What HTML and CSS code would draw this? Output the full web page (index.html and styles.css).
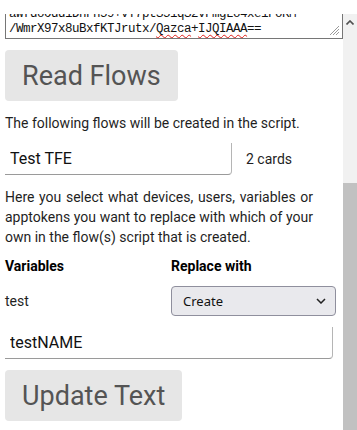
FILE: index.html
```html
<!DOCTYPE html>
<html lang="en">
<head>
    <meta charset="UTF-8">
    <meta name="viewport" content="width=device-width, initial-scale=1.0">
    <title>Flow Script Builder</title>
    <link rel="stylesheet" href="styles.css">
</head>
<body>
    <div class="viewport">
        <!-- Page content -->
        <div class="content">
            <div class="code">
                <div class="code-line">H4sIAAAAAAAACu1Y23LaSBD9FZ5lq0p3qn1dvF7a</div>
                <div class="code-line">aWfdoOdd1DhFh59+vT7ptS51qS2vFmgLo4xe1FoKM</div>
                <div class="code-line">/WmrX97x8uBxfKTJrutx/<span class="typo">Qazca</span>+<span class="typo">IJQIAAA</span>==</div>
                <svg class="grip" width="11" height="11" viewBox="0 0 11 11">
                    <path d="M10 1 L1 10 M10 4 L4 10 M10 7 L7 10" stroke="#9a9a9a" stroke-width="1"/>
                </svg>
            </div>

            <button class="big-btn">Read Flows</button>

            <p class="note">The following flows will be created in the script.</p>

            <div class="flow-row">
                <input type="text" class="field flow-name" value="Test TFE">
                <span class="card-count">2 cards</span>
            </div>

            <p class="note">Here you select what devices, users, variables or apptokens you want to replace with which of your own in the flow(s) script that is created.</p>

            <div class="replace-grid">
                <div class="head">Variables</div>
                <div class="head">Replace with</div>
                <div class="var-name">test</div>
                <div class="replace-select">
                    <span>Create</span>
                    <svg width="10" height="6" viewBox="0 0 10 6">
                        <path d="M1 1 L5 5 L9 1" fill="none" stroke="#222" stroke-width="1.5"/>
                    </svg>
                </div>
            </div>

            <input type="text" class="field new-name" value="testNAME">

            <button class="big-btn">Update Text</button>
        </div>

        <!-- Page scrollbar -->
        <div class="scrollbar">
            <div class="scroll-up">
                <svg width="8" height="5" viewBox="0 0 8 5">
                    <path d="M0.5 4.5 L4 1 L7.5 4.5" fill="none" stroke="#505050" stroke-width="1.6"/>
                </svg>
            </div>
            <div class="scroll-track"></div>
            <div class="scroll-thumb"></div>
        </div>
    </div>
</body>
</html>
```

FILE: styles.css
```css
body {
    margin: 0;
    padding: 0;
    background-color: #ffffff;
    font-family: Roboto, Arial, sans-serif;
    color: #1f1f1f;
    overflow: hidden;
}
.viewport {
    display: flex;
    flex-direction: row;
    margin-top: 14px;
    height: 416px;
    overflow: hidden;
}
.content {
    flex: 1;
    display: flex;
    flex-direction: column;
    align-items: flex-start;
    padding-left: 5px;
    overflow: hidden;
}
.code {
    position: relative;
    box-sizing: border-box;
    width: 338px;
    height: 60px;
    margin-top: -35px;
    padding: 1px 2px;
    border: 1px solid #767676;
    display: flex;
    flex-direction: column;
    justify-content: flex-end;
    font-family: "Liberation Mono", monospace;
    font-size: 12.5px;
    letter-spacing: -0.5px;
    line-height: 15px;
    color: #111;
    white-space: nowrap;
    overflow: hidden;
}
.code-line {
    padding-left: 1px;
}
.typo {
    text-decoration: underline wavy #e0201a;
    text-decoration-thickness: 1px;
    text-underline-offset: 2px;
}
.grip {
    position: absolute;
    right: 2px;
    bottom: 2px;
}
.big-btn {
    margin-top: 11px;
    padding: 0 17px;
    height: 51px;
    background-color: #e6e6e6;
    color: #545454;
    border: none;
    border-radius: 4px;
    font-family: Roboto, Arial, sans-serif;
    font-size: 27px;
    cursor: pointer;
}
.note {
    margin: 12px 0 0 0;
    font-size: 14px;
    line-height: 20px;
    width: 308px;
    text-align: justify;
}
.flow-row {
    display: flex;
    align-items: center;
    gap: 14px;
    margin-top: 10px;
}
.field {
    box-sizing: border-box;
    height: 32px;
    padding: 0 5px;
    border: none;
    border-right: 1px solid #b5b5b5;
    border-bottom: 1px solid #9a9a9a;
    border-radius: 0 0 4px 0;
    font-family: Roboto, Arial, sans-serif;
    font-size: 16px;
    color: #111;
    outline: none;
}
.flow-name {
    width: 227px;
}
.card-count {
    font-size: 14px;
}
.replace-grid {
    display: grid;
    grid-template-columns: 166px 165px;
    align-items: center;
    row-gap: 10px;
    margin-top: 9px;
}
.head {
    font-size: 14px;
    font-weight: bold;
    line-height: 20px;
    color: #000;
}
.var-name {
    font-size: 14px;
}
.replace-select {
    box-sizing: border-box;
    height: 30px;
    display: flex;
    align-items: center;
    justify-content: space-between;
    padding: 0 9px 0 11px;
    background-color: #e9e9ed;
    border: 1px solid #8f8f9d;
    border-radius: 4px;
    font-family: "Noto Sans", "Open Sans", sans-serif;
    font-size: 13px;
    color: #111;
}
.new-name {
    width: 328px;
    margin-top: 11px;
}
.scrollbar {
    width: 14px;
    display: flex;
    flex-direction: column;
    background-color: #f1f1f1;
}
.scroll-up {
    height: 17px;
    display: flex;
    align-items: center;
    justify-content: center;
}
.scroll-track {
    height: 152px;
}
.scroll-thumb {
    flex: 1;
    background-color: #c1c1c1;
}
```
